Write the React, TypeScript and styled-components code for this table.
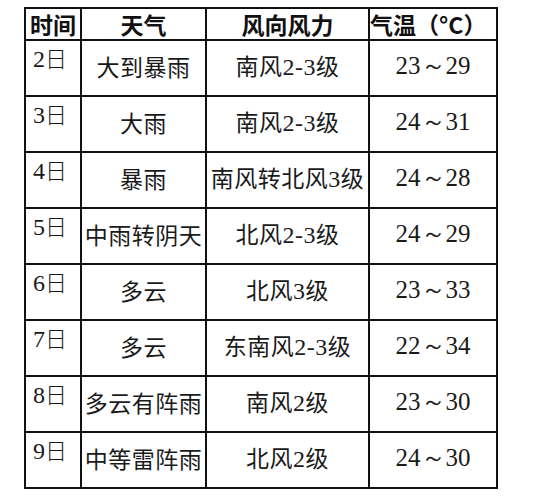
import React from "react";
import styled, { createGlobalStyle } from "styled-components";

const GlobalStyle = createGlobalStyle`
  body {
    margin: 0;
    background: #ffffff;
  }
`;

const Page = styled.div`
  width: 543px;
  height: 500px;
  overflow: hidden;
  background: #fff;
`;

// cut-off line of text from the page above the table
const CutLine = styled.div`
  height: 3px;
  overflow: hidden;
  padding-left: 168px;
  color: #a8a8a8;
  white-space: nowrap;
  font-family: "Noto Sans CJK SC", sans-serif;
  font-size: 22px;
  letter-spacing: 6px;
  span {
    display: block;
    margin-top: -29px;
  }
`;

const Table = styled.table`
  margin-left: 24px;
  margin-top: 4px;
  border-collapse: collapse;
  table-layout: fixed;
  width: 472px;
  color: #1a1a1a;
  td,
  th {
    border: 2px solid #111;
    padding: 0;
  }
`;

const HeadCell = styled.th<{ $align?: string }>`
  height: 30px;
  font-family: "Noto Sans CJK SC", sans-serif;
  font-weight: 700;
  font-size: 23px;
  line-height: 28px;
  text-align: ${(p) => p.$align || "center"};
  white-space: nowrap;
  color: #111;
`;

const DateCell = styled.td`
  height: 50px;
  vertical-align: top;
  padding: 4px 0 0 7px !important;
  font-family: "Liberation Serif", "Noto Sans CJK SC", serif;
  font-size: 24px;
  line-height: 24px;
  span {
    font-family: "Noto Sans CJK SC", sans-serif;
    font-weight: 300;
    font-size: 22px;
  }
`;

const TextCell = styled.td`
  text-align: center;
  vertical-align: middle;
  font-family: "Noto Sans CJK SC", sans-serif;
  font-weight: 400;
  font-size: 23px;
  line-height: 28px;
  white-space: nowrap;
  padding-bottom: 4px !important;
  letter-spacing: 0.5px;
`;

const TempCell = styled.td`
  text-align: center;
  vertical-align: middle;
  font-family: "Liberation Serif", serif;
  font-size: 25px;
  line-height: 28px;
  padding-bottom: 4px !important;
`;

const Num = styled.span`
  font-family: "Liberation Serif", serif;
  font-size: 24px;
`;

const rows = [
  { d: "2", w: "大到暴雨", f: ["南风", "2-3", "级"], t: "23～29" },
  { d: "3", w: "大雨", f: ["南风", "2-3", "级"], t: "24～31" },
  { d: "4", w: "暴雨", f: ["南风转北风", "3", "级"], t: "24～28" },
  { d: "5", w: "中雨转阴天", f: ["北风", "2-3", "级"], t: "24～29" },
  { d: "6", w: "多云", f: ["北风", "3", "级"], t: "23～33" },
  { d: "7", w: "多云", f: ["东南风", "2-3", "级"], t: "22～34" },
  { d: "8", w: "多云有阵雨", f: ["南风", "2", "级"], t: "23～30" },
  { d: "9", w: "中等雷阵雨", f: ["北风", "2", "级"], t: "24～30" },
];

export default function App() {
  return (
    <Page>
      <GlobalStyle />
      <CutLine>
        <span>近期天气情况 为保证安全 请注意出行</span>
      </CutLine>
      <Table>
        <colgroup>
          <col style={{ width: 56 }} />
          <col style={{ width: 125 }} />
          <col style={{ width: 163 }} />
          <col style={{ width: 128 }} />
        </colgroup>
        <thead>
          <tr>
            <HeadCell>时间</HeadCell>
            <HeadCell>天气</HeadCell>
            <HeadCell>风向风力</HeadCell>
            <HeadCell $align="left">气温（°C）</HeadCell>
          </tr>
        </thead>
        <tbody>
          {rows.map((r) => (
            <tr key={r.d}>
              <DateCell>
                {r.d}
                <span>日</span>
              </DateCell>
              <TextCell>{r.w}</TextCell>
              <TextCell>
                {r.f[0]}
                <Num>{r.f[1]}</Num>
                {r.f[2]}
              </TextCell>
              <TempCell>{r.t}</TempCell>
            </tr>
          ))}
        </tbody>
      </Table>
    </Page>
  );
}
